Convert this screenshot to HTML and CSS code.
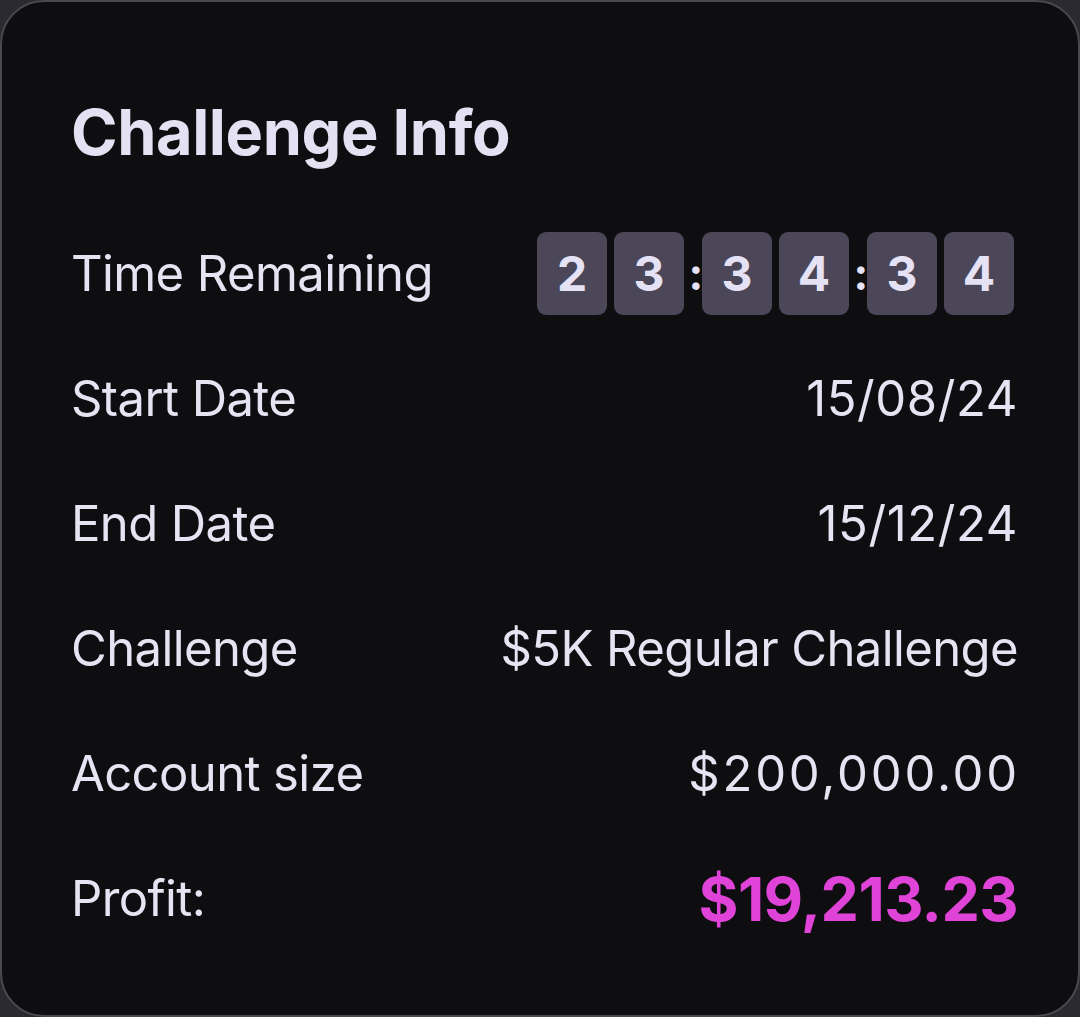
FILE: index.html
```html
<!DOCTYPE html>
<html>
<head>
<meta charset="utf-8">
<link rel="stylesheet" href="styles.css">
</head>
<body>
<div class="card">
  <h1 class="title">Challenge Info</h1>
  <div class="rows">
    <div class="row">
      <span class="label">Time Remaining</span>
      <div class="timer">
        <span class="digit">2</span><span class="digit">3</span><span class="colon">:</span><span class="digit">3</span><span class="digit">4</span><span class="colon">:</span><span class="digit">3</span><span class="digit">4</span>
      </div>
    </div>
    <div class="row"><span class="label">Start Date</span><span class="value date">15/08/24</span></div>
    <div class="row"><span class="label">End Date</span><span class="value date">15/12/24</span></div>
    <div class="row"><span class="label">Challenge</span><span class="value">$5K Regular Challenge</span></div>
    <div class="row"><span class="label">Account size</span><span class="value amount">$200,000.00</span></div>
    <div class="row"><span class="label">Profit:</span><span class="value profit">$19,213.23</span></div>
  </div>
</div>
</body>
</html>
```
FILE: styles.css
```css
html, body {
  margin: 0;
  padding: 0;
  background: #2a2a30;
}
body {
  width: 1080px;
  height: 1017px;
  font-family: Inter, "Noto Sans", sans-serif;
  color: #e6e3f2;
}
.card {
  box-sizing: border-box;
  width: 1080px;
  height: 1017px;
  background: #0e0d10;
  border: 2px solid #4a4950;
  border-radius: 44px;
  padding: 92px 60px 0 69px;
}
.title {
  margin: 0;
  font-size: 63px;
  font-weight: 700;
  line-height: 76px;
  letter-spacing: -0.4px;
  color: #e4e1f3;
}
.rows {
  display: flex;
  flex-direction: column;
  margin-top: 41px;
}
.row {
  display: flex;
  align-items: center;
  justify-content: space-between;
  height: 125px;
}
.label, .value {
  font-size: 49px;
  font-weight: 400;
  letter-spacing: -0.6px;
}
.value {
  text-align: right;
}
.date {
  letter-spacing: 0.6px;
}
.amount {
  letter-spacing: 2.8px;
  margin-right: -2px;
}
.profit {
  color: #e043d8;
  font-weight: 700;
  font-size: 61px;
}
.timer {
  display: flex;
  align-items: center;
  gap: 7px;
  margin-right: 4px;
}
.digit {
  width: 70px;
  height: 83px;
  border-radius: 9px;
  background: #4b4759;
  display: flex;
  align-items: center;
  justify-content: center;
  font-size: 48px;
  font-weight: 700;
  color: #e6e2f5;
}
.colon {
  font-size: 44px;
  font-weight: 700;
  width: 9px;
  text-align: center;
  color: #e6e2f5;
  margin: 0 -2.5px;
}
```
